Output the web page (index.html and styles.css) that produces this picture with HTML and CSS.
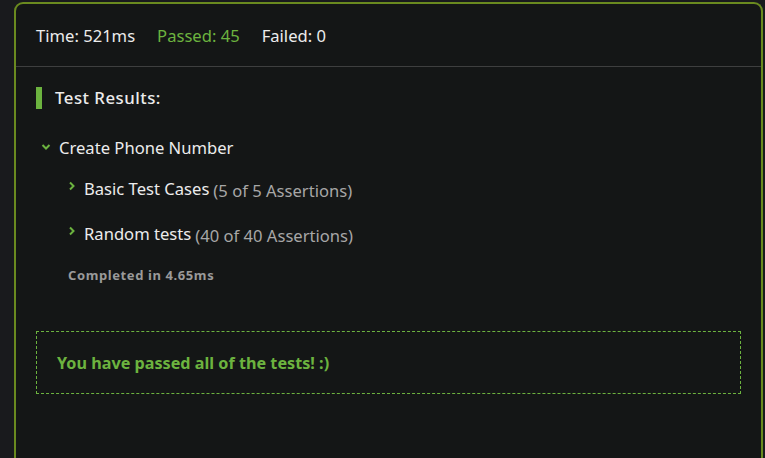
FILE: index.html
```html
<!DOCTYPE html>
<html>
<head>
<meta charset="utf-8">
<link rel="stylesheet" href="styles.css">
</head>
<body>
<div class="panel">
  <div class="summary">
    <span class="stat">Time: 521ms</span>
    <span class="stat pass">Passed: 45</span>
    <span class="stat">Failed: 0</span>
  </div>
  <div class="content">
    <h3 class="results-title">Test Results:</h3>
    <div class="group">
      <div class="row top">
        <svg class="chev" width="10" height="8" viewBox="0 0 10 8"><path d="M1.5 2 L5 5.5 L8.5 2" fill="none" stroke="#6cb33f" stroke-width="2"/></svg>
        <span class="label">Create Phone Number</span>
      </div>
      <div class="children">
        <div class="row sub">
          <svg class="chev-r" width="8" height="10" viewBox="0 0 8 10"><path d="M2 1.5 L5.5 5 L2 8.5" fill="none" stroke="#6cb33f" stroke-width="2"/></svg>
          <span class="label">Basic Test Cases</span>
          <span class="count">(5 of 5 Assertions)</span>
        </div>
        <div class="row sub">
          <svg class="chev-r" width="8" height="10" viewBox="0 0 8 10"><path d="M2 1.5 L5.5 5 L2 8.5" fill="none" stroke="#6cb33f" stroke-width="2"/></svg>
          <span class="label">Random tests</span>
          <span class="count">(40 of 40 Assertions)</span>
        </div>
        <div class="completed">Completed in 4.65ms</div>
      </div>
    </div>
    <div class="passed-box">You have passed all of the tests! :)</div>
  </div>
</div>
</body>
</html>
```

FILE: styles.css
```css
html, body {
  margin: 0;
  padding: 0;
  background: #191a1d;
  height: 100%;
  overflow: hidden;
}
body {
  padding: 2px 2px 0 14px;
  box-sizing: border-box;
  font-family: "Noto Sans", "Open Sans", sans-serif;
}
.panel {
  background: #141616;
  border: 2px solid #6a8a1f;
  border-bottom: none;
  border-radius: 9px 9px 0 0;
  height: 100%;
  box-sizing: border-box;
  color: #ececec;
}
.summary {
  display: flex;
  gap: 22px;
  padding: 0 0 0 20px;
  height: 62px;
  align-items: center;
  border-bottom: 1px solid #3e3f3f;
  font-size: 16.6px;
}
.stat.pass { color: #6cb33f; }
.content {
  padding: 20px 20px 0 20px;
}
.results-title {
  margin: 0;
  border-left: 6px solid #6cb33f;
  padding-left: 13px;
  font-size: 16.8px;
  font-weight: 500;
  line-height: 22px;
  letter-spacing: 0.5px;
}
.group {
  margin-top: 26px;
}
.row {
  display: flex;
  align-items: baseline;
  font-size: 16.6px;
}
.row.top {
  padding-left: 5px;
  align-items: center;
  height: 24px;
}
.chev { margin-right: 8px; }
.children {
  padding-left: 32px;
  padding-top: 17px;
}
.row.sub {
  height: 24px;
  align-items: center;
  margin-bottom: 21px;
}
.chev-r { margin-right: 8px; margin-top: -5px; }
.count {
  color: #a7a7a7;
  font-size: 16.6px;
  margin-left: 4px;
  position: relative;
  top: 2px;
}
.completed {
  margin-top: 0;
  font-size: 13px;
  font-weight: 700;
  color: #9a9a9a;
  letter-spacing: 0.6px;
}
.passed-box {
  margin-top: 47px;
  margin-right: 0;
  width: 705px;
  box-sizing: border-box;
  height: 63px;
  border: 1px dashed #6cb33f;
  color: #6cb33f;
  font-weight: 700;
  font-size: 16.2px;
  display: flex;
  align-items: center;
  padding-left: 20px;
}
```
